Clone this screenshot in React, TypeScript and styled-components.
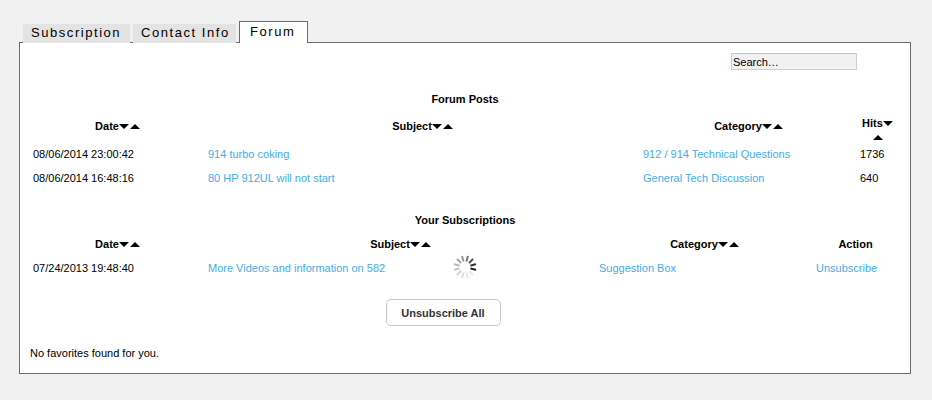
import styled, { createGlobalStyle } from "styled-components";

const GlobalStyle = createGlobalStyle`
  html, body { margin: 0; padding: 0; background: #f1f1f1; }
  body { font-family: "Liberation Sans", Arial, sans-serif; font-size: 11px; color: #000; }
`;

const Page = styled.div`
  width: 932px;
  height: 400px;
  padding: 21px 21px 0 19px;
  box-sizing: border-box;
`;

const TabBar = styled.div`
  display: flex;
  align-items: flex-end;
  gap: 3px;
  padding-left: 4px;
  height: 22px;
  position: relative;
  z-index: 1;
  margin-bottom: -1px;
`;

const Tab = styled.div<{ $active?: boolean; $width: number }>`
  box-sizing: border-box;
  width: ${(p) => p.$width}px;
  height: ${(p) => (p.$active ? "22px" : "19px")};
  padding: ${(p) => (p.$active ? "2px 0 0 10px" : "1px 0 0 8px")};
  font-size: 13px;
  line-height: 16px;
  letter-spacing: 1.55px;
  white-space: nowrap;
  background: ${(p) => (p.$active ? "#fff" : "#e3e3e3")};
  border: ${(p) => (p.$active ? "1px solid #6b6b6b" : "none")};
  border-bottom: none;
`;

const Panel = styled.div`
  position: relative;
  box-sizing: border-box;
  width: 892px;
  height: 332px;
  background: #fff;
  border: 1px solid #6b6b6b;
  padding: 10px 7px 0;
`;

const SearchRow = styled.div`
  display: flex;
  justify-content: flex-end;
  padding-right: 46px;
`;

const SearchBox = styled.input`
  box-sizing: border-box;
  width: 126px;
  height: 17px;
  padding: 0 1px;
  background: #f1f1f1;
  border: 1px solid #cfcfcf;
  border-top-color: #c4c4c4;
  font-family: inherit;
  font-size: 11px;
  color: #000;
  outline: none;
  &::placeholder { color: #000; opacity: 1; }
`;

const Title = styled.h3<{ $top: number }>`
  margin: ${(p) => p.$top}px 0 0;
  font-size: 11px;
  line-height: 14px;
  font-weight: bold;
  text-align: center;
  width: 876px;
`;

const Table = styled.table`
  table-layout: fixed;
  width: 868px;
  margin-top: 4px;
  border-collapse: collapse;
`;

const HeadCell = styled.th<{ $pad: number; $bottom?: number }>`
  padding: ${(p) => p.$pad}px 0 ${(p) => p.$bottom ?? 0}px 6px;
  font-size: 11px;
  font-weight: bold;
  text-align: center;
  vertical-align: top;
  line-height: 14px;
`;

// the Hits header wraps onto two lines and hangs a little below its row
const WrappedLabel = styled.div`
  margin-bottom: -2px;
`;

const Cell = styled.td`
  padding: 0 0 0 6px;
  height: 24px;
  font-size: 11px;
  line-height: 14px;
  white-space: nowrap;
`;

const Link = styled.a`
  color: #45ade4;
  text-decoration: none;
`;

const Arrow = styled.span<{ $up?: boolean }>`
  display: inline-block;
  width: 0;
  height: 0;
  vertical-align: 1px;
  margin-left: ${(p) => (p.$up ? "1px" : "0")};
  border-left: 5px solid transparent;
  border-right: 5px solid transparent;
  ${(p) => (p.$up ? "border-bottom: 5px solid #000;" : "border-top: 5px solid #000;")}
`;

const SpinnerWrap = styled.div`
  position: absolute;
  left: 432px;
  top: 211px;
  width: 26px;
  height: 26px;
`;

const ButtonRow = styled.div`
  display: flex;
  justify-content: center;
  width: 832px;
  margin-top: 19px;
`;

const Button = styled.button`
  box-sizing: border-box;
  width: 115px;
  height: 27px;
  padding: 0;
  background: #fff;
  border: 1px solid #c6c6c6;
  border-radius: 5px;
  font-family: inherit;
  font-size: 11px;
  font-weight: bold;
  color: #333;
`;

const Note = styled.p`
  margin: 20px 0 0 3px;
  font-size: 11px;
  line-height: 14px;
`;

const Sort = () => (
  <>
    <Arrow />
    <Arrow $up />
  </>
);

const spinnerShades = ["#222", "#333", "#555", "#777", "#999", "#aaa", "#bbb", "#c8c8c8", "#d4d4d4", "#dedede", "#e6e6e6", "#ececec"];

const Spinner = () => (
  <SpinnerWrap>
    <svg width="26" height="26" viewBox="0 0 26 26">
      {spinnerShades.map((c, i) => (
        <rect
          key={i}
          x="12"
          y="1.5"
          width="2"
          height="6"
          rx="0.6"
          fill={c}
          transform={`rotate(${105 - i * 30} 13 13)`}
        />
      ))}
    </svg>
  </SpinnerWrap>
);

const App = () => (
  <Page>
    <GlobalStyle />
    <TabBar>
      <Tab $width={107}>Subscription</Tab>
      <Tab $width={103}>Contact Info</Tab>
      <Tab $active $width={69}>Forum</Tab>
    </TabBar>
    <Panel>
      <SearchRow>
        <SearchBox placeholder="Search…" />
      </SearchRow>
      <Title $top={22}>Forum Posts</Title>
      <Table>
        <colgroup>
          <col width="175" />
          <col width="435" />
          <col width="217" />
          <col width="41" />
        </colgroup>
        <thead>
          <tr>
            <HeadCell $pad={9}>Date<Sort /></HeadCell>
            <HeadCell $pad={9}>Subject<Sort /></HeadCell>
            <HeadCell $pad={9}>Category<Sort /></HeadCell>
            <HeadCell $pad={6}><WrappedLabel>Hits<Sort /></WrappedLabel></HeadCell>
          </tr>
        </thead>
        <tbody>
          <tr>
            <Cell>08/06/2014 23:00:42</Cell>
            <Cell><Link>914 turbo coking</Link></Cell>
            <Cell><Link>912 / 914 Technical Questions</Link></Cell>
            <Cell>1736</Cell>
          </tr>
          <tr>
            <Cell>08/06/2014 16:48:16</Cell>
            <Cell><Link>80 HP 912UL will not start</Link></Cell>
            <Cell><Link>General Tech Discussion</Link></Cell>
            <Cell>640</Cell>
          </tr>
        </tbody>
      </Table>
      <Title $top={23}>Your Subscriptions</Title>
      <Table>
        <colgroup>
          <col width="175" />
          <col width="391" />
          <col width="217" />
          <col width="85" />
        </colgroup>
        <thead>
          <tr>
            <HeadCell $pad={6} $bottom={5}>Date<Sort /></HeadCell>
            <HeadCell $pad={6} $bottom={5}>Subject<Sort /></HeadCell>
            <HeadCell $pad={6} $bottom={5}>Category<Sort /></HeadCell>
            <HeadCell $pad={6} $bottom={5}>Action</HeadCell>
          </tr>
        </thead>
        <tbody>
          <tr>
            <Cell>07/24/2013 19:48:40</Cell>
            <Cell><Link>More Videos and information on 582</Link></Cell>
            <Cell><Link>Suggestion Box</Link></Cell>
            <Cell><Link>Unsubscribe</Link></Cell>
          </tr>
        </tbody>
      </Table>
      <Spinner />
      <ButtonRow>
        <Button>Unsubscribe All</Button>
      </ButtonRow>
      <Note>No favorites found for you.</Note>
    </Panel>
  </Page>
);

export default App;
